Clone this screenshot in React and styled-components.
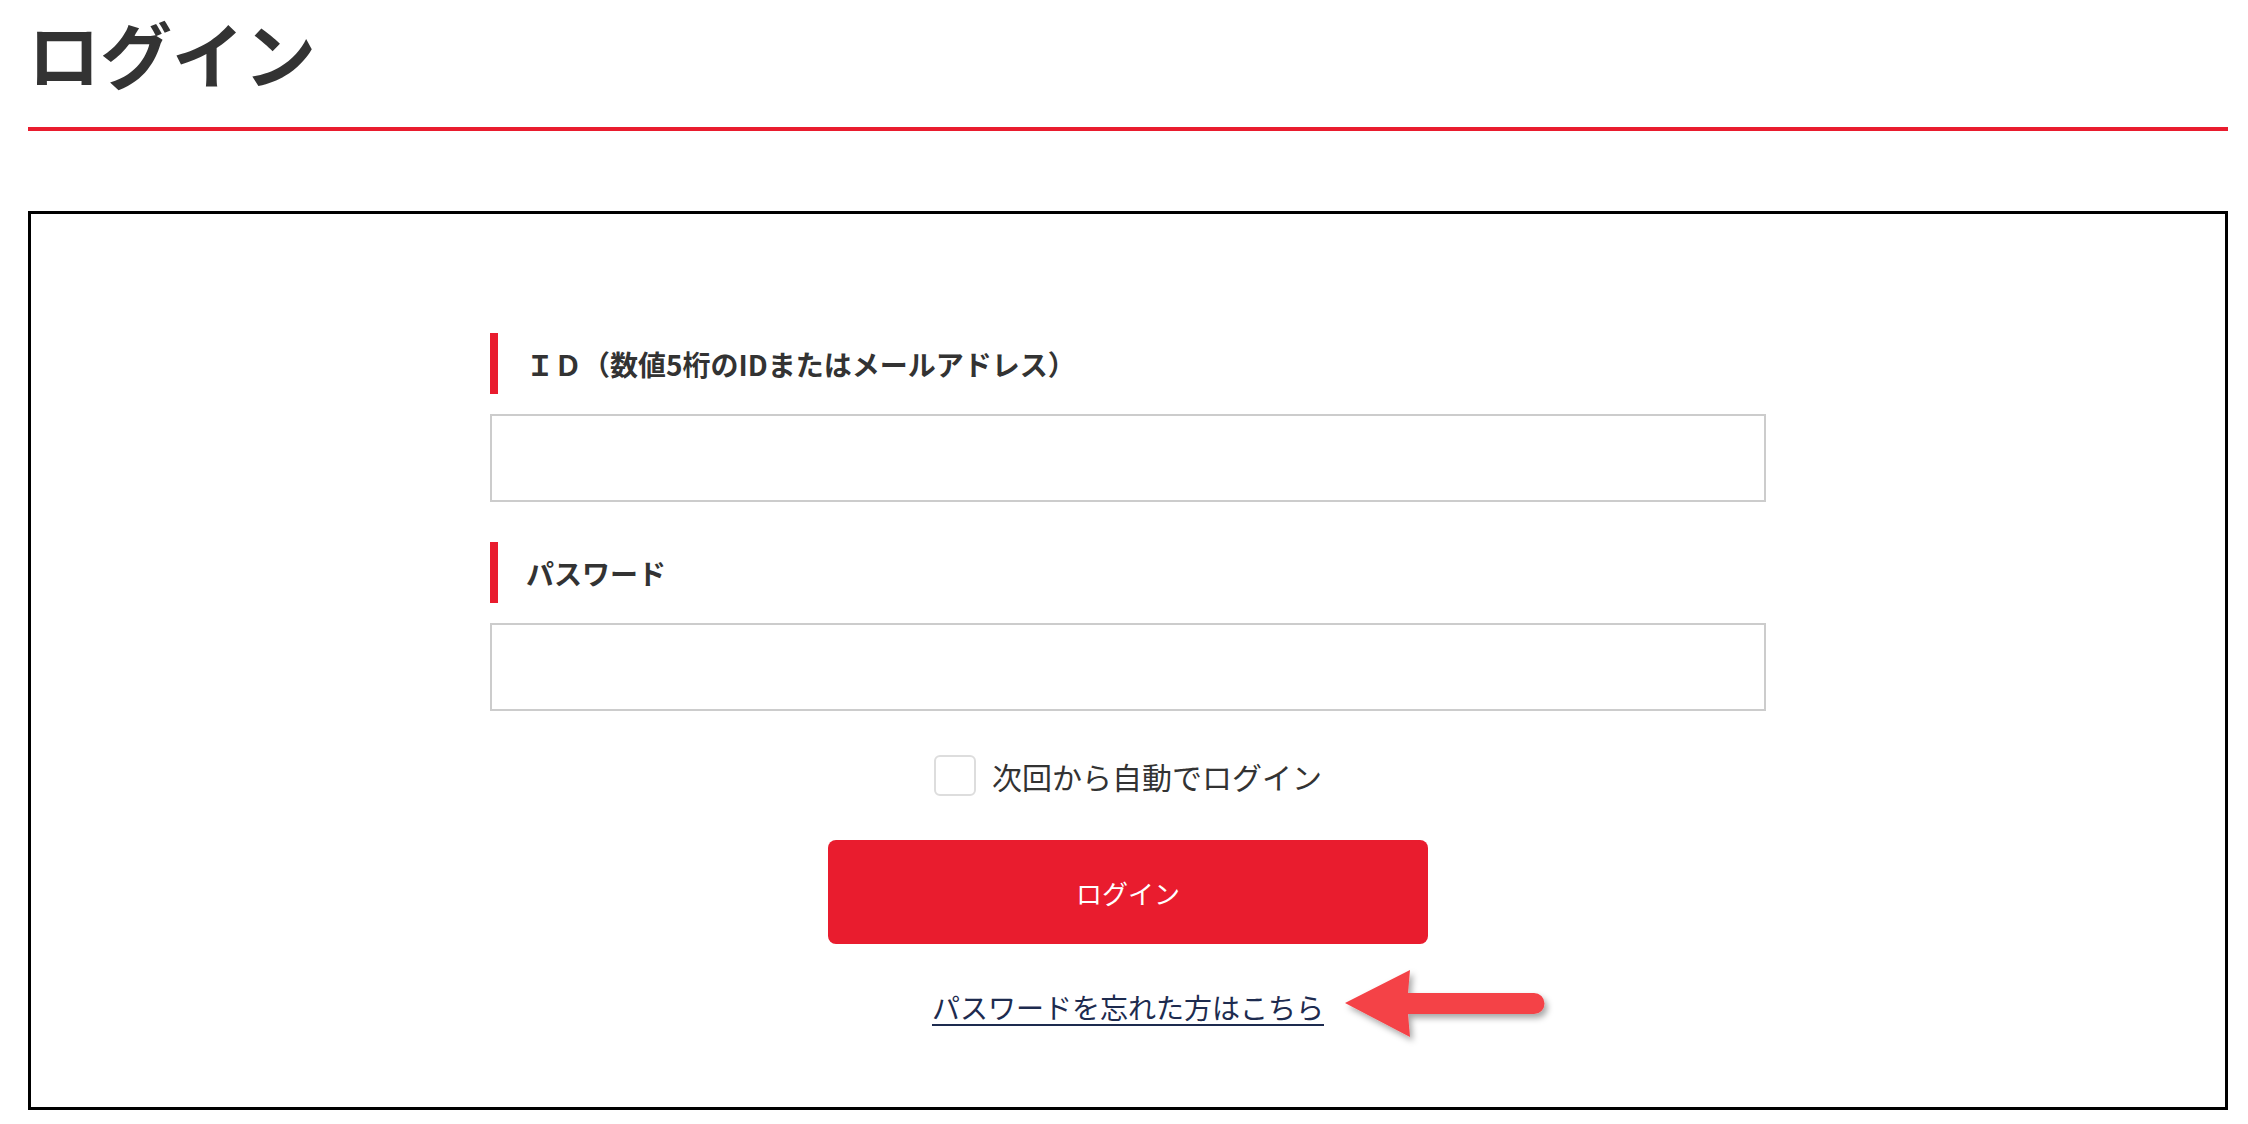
import React from "react";
import styled, { createGlobalStyle } from "styled-components";

const GlobalStyle = createGlobalStyle`
  html, body {
    margin: 0;
    padding: 0;
    background: #fff;
  }
  body {
    font-family: "Noto Sans CJK JP", "Noto Sans", sans-serif;
    color: #333;
  }
`;

const red = "#e91c2e";

const Page = styled.div`
  padding: 0 20px 0 28px;
`;

const Title = styled.h1`
  margin: 0;
  padding-top: 0;
  padding-bottom: 24px;
  font-size: 72px;
  font-weight: 700;
  line-height: 103px;
  color: #333;
  border-bottom: 4px solid ${red};
`;

const Panel = styled.section`
  margin-top: 80px;
  border: 3px solid #000;
  padding: 119px 0 74px;
`;

const Form = styled.form`
  width: 1276px;
  margin: 0 auto;
  display: flex;
  flex-direction: column;
`;

const Field = styled.div`
  display: flex;
  flex-direction: column;
  gap: 20px;
  & + & {
    margin-top: 40px;
  }
`;

const Label = styled.label`
  display: flex;
  align-items: center;
  height: 61px;
  padding-left: 28px;
  border-left: 8px solid ${red};
  font-size: 28px;
  font-weight: 700;
  color: #333;
`;

const Input = styled.input`
  box-sizing: border-box;
  width: 100%;
  height: 88px;
  margin: 0;
  border: 2px solid #cccccc;
  background: #fff;
  font-size: 28px;
  padding: 0 20px;
  outline: none;
`;

const RememberRow = styled.label`
  display: flex;
  align-items: center;
  justify-content: center;
  gap: 16px;
  margin-top: 44px;
  height: 41px;
  font-size: 30px;
  color: #333;
`;

const Check = styled.input`
  appearance: none;
  box-sizing: border-box;
  width: 42px;
  height: 41px;
  margin: 0;
  border: 2px solid #dddddd;
  border-radius: 6px;
  background: #fff;
`;

const Submit = styled.button`
  align-self: center;
  width: 600px;
  height: 104px;
  margin-top: 44px;
  border: none;
  border-radius: 8px;
  background: ${red};
  color: #fff;
  font-family: inherit;
  font-size: 26px;
  font-weight: 400;
  cursor: pointer;
`;

const LinkRow = styled.div`
  position: relative;
  align-self: center;
  margin-top: 42px;
  line-height: 42px;
`;

const ForgotLink = styled.a`
  font-size: 28px;
  color: #1d2b4f;
  text-decoration: underline;
  text-decoration-thickness: 2px;
  text-underline-offset: 5px;
`;

const Pointer = styled.svg`
  position: absolute;
  left: calc(100% + 17px);
  top: -22px;
  width: 214px;
  height: 86px;
  overflow: visible;
`;

const Arrow = () => (
  <Pointer viewBox="0 0 214 86">
    <defs>
      <filter id="arrowShadow" x="-10%" y="-20%" width="130%" height="150%">
        <feDropShadow dx="3" dy="4" stdDeviation="3" floodColor="#000" floodOpacity="0.35" />
      </filter>
    </defs>
    <path
      d="M4 39 L69 6 L67 29 L193 29 A10.5 10.5 0 0 1 193 50 L67 50 L69 73 Z"
      fill="#f44246"
      filter="url(#arrowShadow)"
    />
  </Pointer>
);

export default function App() {
  return (
    <Page>
      <GlobalStyle />
      <Title>ログイン</Title>
      <Panel>
        <Form onSubmit={(e) => e.preventDefault()}>
          <Field>
            <Label htmlFor="login-id">ＩＤ（数値5桁のIDまたはメールアドレス）</Label>
            <Input id="login-id" type="text" />
          </Field>
          <Field>
            <Label htmlFor="login-pass">パスワード</Label>
            <Input id="login-pass" type="password" />
          </Field>
          <RememberRow>
            <Check type="checkbox" />
            次回から自動でログイン
          </RememberRow>
          <Submit type="submit">ログイン</Submit>
          <LinkRow>
            <ForgotLink href="#">パスワードを忘れた方はこちら</ForgotLink>
            <Arrow />
          </LinkRow>
        </Form>
      </Panel>
    </Page>
  );
}
